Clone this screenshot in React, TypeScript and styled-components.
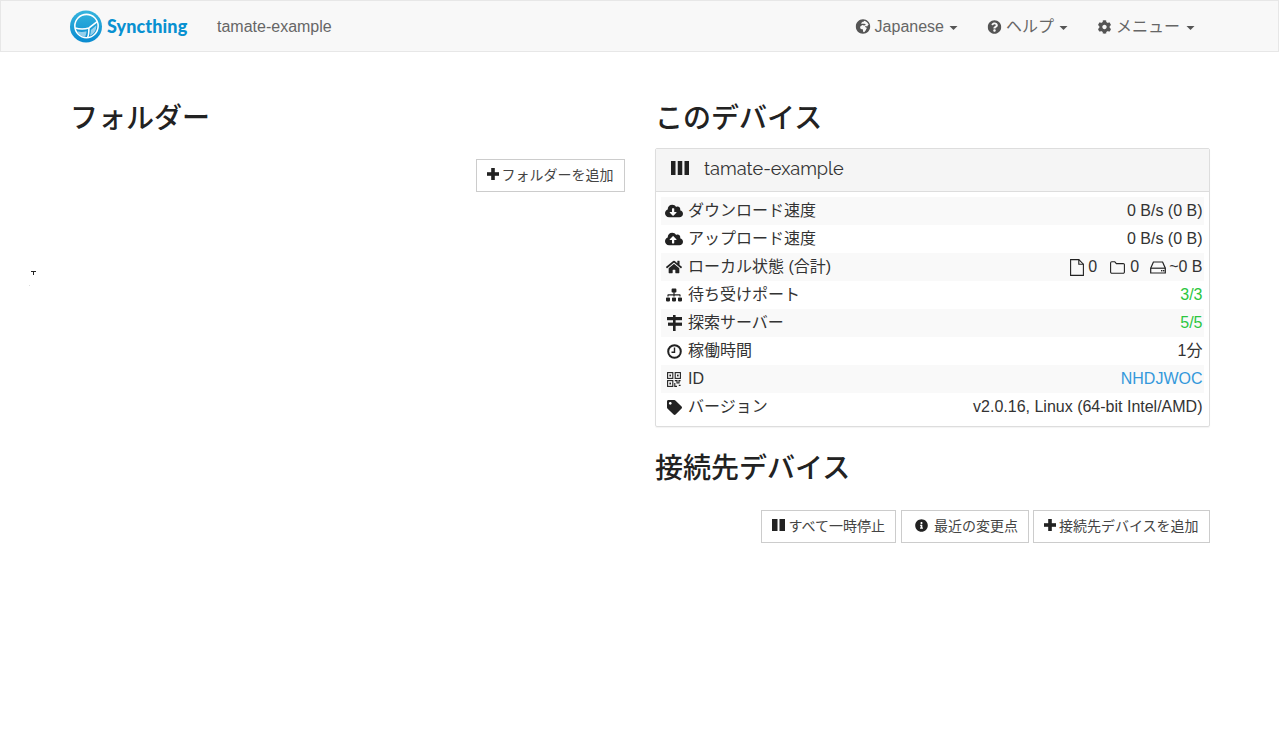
import React from "react";
import styled, { createGlobalStyle } from "styled-components";
import {
  FaCog, FaQuestionCircle, FaCloudDownloadAlt, FaCloudUploadAlt, FaHome, FaSitemap,
  FaTag, FaInfoCircle, FaGlobeAfrica,
} from "react-icons/fa";

const Global = createGlobalStyle`
  html, body { margin: 0; padding: 0; background: #fff; }
  body {
    font-family: "Liberation Sans", "Noto Sans CJK JP", sans-serif;
    font-size: 14px; line-height: 20px; color: #333;
  }
  * { box-sizing: border-box; }
`;

const Navbar = styled.nav`
  height: 52px; background: #f8f8f8; border: 1px solid #e7e7e7;
`;
const NavInner = styled.div`
  width: 1170px; margin: 0 auto; padding: 1px 15px 0 15px; height: 50px;
  display: flex; align-items: center; transform: translateX(-0.5px);
`;
const Brand = styled.div`display: flex; align-items: center; gap: 5px; width: 148px;`;
const BrandName = styled.span`
  font-family: "Lato", sans-serif; font-weight: 900; font-size: 18px; letter-spacing: 0.1px; color: #0891d1;
  position: relative; top: -1px;
`;
const DeviceName = styled.span`font-size: 16px; color: #666;`;
const NavRight = styled.div`margin-left: auto; display: flex; align-items: center;`;
const NavItem = styled.div`
  display: flex; align-items: center; padding: 0 15px; font-size: 16px; color: #666; height: 50px;
  & > svg:first-child { font-size: ${p => p.$icon || 14}px; margin-right: 4px; color: #555; }
`;
const Caret = styled.span`
  width: 0; height: 0; margin-left: 6px; margin-top: 2px;
  border-top: 4px solid #555; border-left: 4px solid transparent; border-right: 4px solid transparent;
`;

const Container = styled.main`
  width: 1170px; margin: 0 auto; padding-top: 43px; display: grid;
  grid-template-columns: 585px 585px;
`;
const Column = styled.section`padding: 0 15px;`;
const Heading = styled.h3`
  margin: 0 0 11px; padding-left: 0.5px; font-size: 28px; line-height: 42px; font-weight: 500; color: #222;
  font-family: "Noto Sans CJK JP", sans-serif;
`;
const Actions = styled.div`
  display: flex; justify-content: flex-end; gap: ${p => p.$gap}px; margin-top: ${p => p.$top}px;
`;
const Button = styled.button`
  height: 33px; padding: 0 10px 3px; background: #fff; border: 1px solid #ccc; border-radius: 0;
  font-family: "Liberation Sans", "Noto Sans CJK JP", sans-serif; font-size: 14px; color: #444;
  display: inline-flex; align-items: center; gap: 3px; white-space: nowrap;
  margin-right: ${p => p.$after || 0}px;
`;
const InfoIcon = styled(FaInfoCircle)`font-size: 13px; color: #222; margin: 0 3px;`;
const Panel = styled.div`
  border: 1px solid #ddd; border-radius: 2px; box-shadow: 0 1px 1px rgba(0,0,0,.05); margin-bottom: 18px;
`;
const PanelHead = styled.div`
  height: 43px; background: #f5f5f5; border-bottom: 1px solid #ddd; display: flex; align-items: center;
  padding: 0 15px 3px; gap: 15.5px; font-family: "Raleway", "Lato", sans-serif; font-size: 18.2px; color: #333;
`;
const PanelBody = styled.div`padding: 5px;`;
const Row = styled.div`
  height: 28px; display: flex; align-items: center; justify-content: space-between; padding: 0 1px 0 4px;
  font-size: 16px; color: #333;
  &:nth-child(odd) { background: #f9f9f9; }
`;
const Label = styled.div`display: flex; align-items: center; white-space: nowrap;`;
const IconBox = styled.span`
  width: 19px; display: inline-flex; justify-content: center; align-items: center; color: #222;
  font-size: ${p => p.$size || 16}px;
`;
const Value = styled.div`
  display: flex; align-items: center; color: ${p => p.$color || "#333"}; white-space: nowrap;
`;
const Stat = styled.span`
  display: inline-flex; align-items: center; margin-left: ${p => p.$left}px; gap: ${p => p.$gap}px;
`;
const Speck = styled.svg`position: absolute; left: 29px; top: 269px;`;
const IdenticonSvg = styled.svg`margin-bottom: 2px;`;

const Logo = () => (
  <svg width="33" height="33" viewBox="0 0 34 34">
    <defs>
      <linearGradient id="lg" x1="0" y1="0" x2="0" y2="1">
        <stop offset="0" stopColor="#35b4dd" />
        <stop offset="1" stopColor="#0a8bd0" />
      </linearGradient>
    </defs>
    <circle cx="17" cy="17" r="16.5" fill="url(#lg)" />
    <circle cx="17.5" cy="16.5" r="12" fill="none" stroke="#fff" strokeWidth="1.6" />
    <path d="M5.8 18.5 C11 20 15 20 20 18.5 L28.5 12 M20 18.5 C20 23 20 26 18.5 28.5" fill="none" stroke="#fff" strokeWidth="1.6" />
    <path d="M8 22 C11 23 14.5 23 17.5 22 C17.5 24 17 26 16 27.5 C12.5 27.5 9.5 25.5 8 22Z" fill="#fff" fillOpacity=".55" />
    <path d="M22 20.5 L27.5 16 C28 20 25.5 25 21 26.5 C21.8 24.5 22 22.5 22 20.5Z" fill="#fff" fillOpacity=".55" />
  </svg>
);

const Identicon = () => (
  <IdenticonSvg width="18" height="14" viewBox="0 0 18 14" fill="#222">
    <rect x="0" y="0" width="4.5" height="14" />
    <rect x="6.75" y="0" width="4.5" height="14" />
    <rect x="13.5" y="0" width="4.5" height="14" />
  </IdenticonSvg>
);

const PlusIcon = () => (
  <svg width="12" height="12" viewBox="0 0 12 12" fill="#222">
    <rect x="0" y="4.2" width="12" height="3.6" />
    <rect x="4.2" y="0" width="3.6" height="12" />
  </svg>
);

const PauseIcon = () => (
  <svg width="13" height="12" viewBox="0 0 13 12" fill="#222">
    <rect x="0" y="0" width="5.5" height="12" />
    <rect x="7.5" y="0" width="5.5" height="12" />
  </svg>
);

const SignsIcon = () => (
  <svg width="15" height="16" viewBox="0 0 15 16" fill="#222">
    <rect x="0" y="2" width="15" height="3.2" />
    <rect x="1" y="7.6" width="14" height="3.2" />
    <rect x="6" y="0" width="2.6" height="16" />
  </svg>
);

const ClockIcon = () => (
  <svg width="15" height="15" viewBox="0 0 15 15" fill="none" stroke="#222">
    <circle cx="7.5" cy="7.5" r="6.3" strokeWidth="2" />
    <path d="M7.5 3.5V8.2H4.5" strokeWidth="1.4" />
  </svg>
);

const QrIcon = () => (
  <svg width="14" height="15" viewBox="0 0 14 15" fill="none" stroke="#222" strokeWidth="1.1">
    <rect x="0.6" y="0.6" width="5.2" height="5.8" />
    <rect x="8.2" y="0.6" width="5.2" height="5.8" />
    <rect x="0.6" y="8.6" width="5.2" height="5.8" />
    <rect x="2.4" y="2.6" width="1.6" height="1.8" fill="#222" stroke="none" />
    <rect x="10" y="2.6" width="1.6" height="1.8" fill="#222" stroke="none" />
    <rect x="2.4" y="10.6" width="1.6" height="1.8" fill="#222" stroke="none" />
    <path d="M7.8 8.6H10V11H12V8.6H13.6M7.8 11V14.4H10M11.8 13.4H13.6" />
  </svg>
);

const FileIcon = () => (
  <svg width="14" height="17" viewBox="0 0 14 17" fill="none" stroke="#222" strokeWidth="1.1">
    <path d="M0.6 0.6H8.8L13.4 5.2V16.4H0.6Z" />
    <path d="M8.8 0.6V5.2H13.4" />
  </svg>
);

const FolderIcon = () => (
  <svg width="15" height="13" viewBox="0 0 15 13" fill="none" stroke="#222" strokeWidth="1.1">
    <path d="M0.6 2A1.2 1.2 0 0 1 1.8 0.8H4.8L6.4 2.6H13.2A1.2 1.2 0 0 1 14.4 3.8V11A1.2 1.2 0 0 1 13.2 12.2H1.8A1.2 1.2 0 0 1 0.6 11Z" />
  </svg>
);

const HddIcon = () => (
  <svg width="16" height="13" viewBox="0 0 16 13" fill="none" stroke="#222" strokeWidth="1.2">
    <path d="M0.7 7.2L3.4 1H12.6L15.3 7.2V12H0.7Z" />
    <path d="M0.7 7.2H15.3" />
    <rect x="11" y="9" width="1.4" height="1.4" fill="#222" stroke="none" />
    <rect x="13" y="9" width="1.4" height="1.4" fill="#222" stroke="none" />
  </svg>
);

const rows: { icon: React.ReactNode; size?: number; label: string; value: React.ReactNode; color?: string }[] = [
  { icon: <FaCloudDownloadAlt />, size: 18, label: "ダウンロード速度", value: "0 B/s (0 B)" },
  { icon: <FaCloudUploadAlt />, size: 18, label: "アップロード速度", value: "0 B/s (0 B)" },
  {
    icon: <FaHome />, label: "ローカル状態 (合計)",
    value: (<>
      <Stat $left={0} $gap={4}><FileIcon />0</Stat>
      <Stat $left={13} $gap={5}><FolderIcon />0</Stat>
      <Stat $left={11} $gap={3}><HddIcon />~0 B</Stat>
    </>),
  },
  { icon: <FaSitemap />, label: "待ち受けポート", value: "3/3", color: "#2cc640" },
  { icon: <SignsIcon />, label: "探索サーバー", value: "5/5", color: "#2cc640" },
  { icon: <ClockIcon />, label: "稼働時間", value: "1分" },
  { icon: <QrIcon />, label: "ID", value: "NHDJWOC", color: "#3498db" },
  { icon: <FaTag />, size: 15, label: "バージョン", value: "v2.0.16, Linux (64-bit Intel/AMD)" },
];

export default function App() {
  return (
    <>
      <Global />
      <Navbar>
        <NavInner>
          <Brand><Logo /><BrandName>Syncthing</BrandName></Brand>
          <DeviceName>tamate-example</DeviceName>
          <NavRight>
            <NavItem $icon={15}><FaGlobeAfrica />Japanese<Caret /></NavItem>
            <NavItem><FaQuestionCircle />ヘルプ<Caret /></NavItem>
            <NavItem><FaCog />メニュー<Caret /></NavItem>
          </NavRight>
        </NavInner>
      </Navbar>
      <Speck width="8" height="18" viewBox="0 0 8 18">
        <path d="M2 2h5v1H5v3H4V3H2z" fill="#222" />
        <rect x="0" y="16" width="1" height="1" fill="#ddd" />
      </Speck>
      <Container>
        <Column>
          <Heading>フォルダー</Heading>
          <Actions $top={22} $gap={5}><Button><PlusIcon />フォルダーを追加</Button></Actions>
        </Column>
        <Column>
          <Heading>このデバイス</Heading>
          <Panel>
            <PanelHead><Identicon />tamate-example</PanelHead>
            <PanelBody>
              {rows.map((r) => (
                <Row key={r.label}>
                  <Label><IconBox $size={r.size}>{r.icon}</IconBox>&nbsp;{r.label}</Label>
                  <Value $color={r.color}>{r.value}</Value>
                </Row>
              ))}
            </PanelBody>
          </Panel>
          <Heading>接続先デバイス</Heading>
          <Actions $top={23} $gap={4}>
            <Button $after={1}><PauseIcon />すべて一時停止</Button>
            <Button><InfoIcon />最近の変更点</Button>
            <Button><PlusIcon />接続先デバイスを追加</Button>
          </Actions>
        </Column>
      </Container>
    </>
  );
}
